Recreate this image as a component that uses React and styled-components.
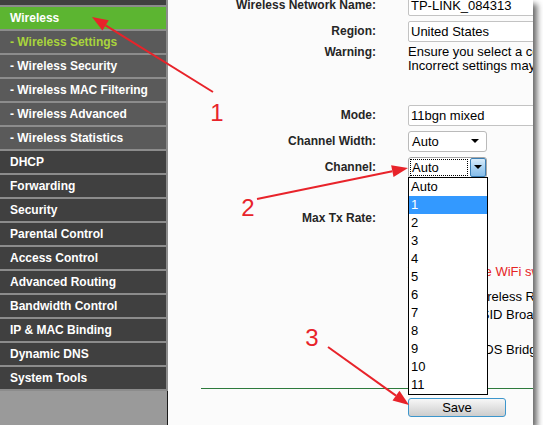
import React from 'react';
import styled, { createGlobalStyle } from 'styled-components';

const GlobalStyle = createGlobalStyle`
  *, *::before, *::after { box-sizing: border-box; }
  html, body { margin: 0; padding: 0; background: #fff; }
  body { font-family: "Liberation Sans", Arial, sans-serif; }
`;

const Frame = styled.div`
  position: relative;
  width: 533px;
  height: 425px;
  display: flex;
  overflow: hidden;
  box-shadow: 4px 4px 6px rgba(0, 0, 0, 0.6);
`;

const Sidebar = styled.nav`
  width: 168px;
  flex: none;
  display: flex;
  flex-direction: column;
  margin-top: -17px;
`;

const NavItem = styled.div`
  height: 24px;
  line-height: 22px;
  padding-left: 10px;
  font-size: 12px;
  font-weight: bold;
  white-space: nowrap;
  background: ${({ $active, $sub }) =>
    $active ? '#5cb531' : $sub ? '#5a5a5a' : '#404040'};
  color: ${({ $current }) => ($current ? '#a9d43c' : '#ffffff')};
  border-bottom: 2px solid #8c8c8c;
  border-right: 2px solid #8c8c8c;
`;

const Filler = styled.div`
  flex: 1;
  background: #9a9a9a;
  border-right: 1px solid #1a1a1a;
`;

const Content = styled.main`
  flex: 1;
  min-width: 0;
  background: #fbfbfb;
  font-size: 13px;
  color: #000;
`;

const Form = styled.div`
  display: flex;
  flex-direction: column;
  margin-top: -8px;
`;

const Row = styled.div`
  display: grid;
  grid-template-columns: 208px 1fr;
  column-gap: 32px;
  align-items: ${({ $top }) => ($top ? 'start' : 'center')};
  height: ${({ $h }) => $h || 26}px;
  margin-top: ${({ $mt }) => $mt || 0}px;
  padding-top: ${({ $top }) => ($top ? 1 : 0)}px;
`;

const Label = styled.div`
  text-align: right;
  font-weight: bold;
  font-size: 12px;
  line-height: 14px;
  color: #262626;
  white-space: nowrap;
`;

const Value = styled.div`
  position: relative;
  min-width: 0;
  white-space: nowrap;
  line-height: 14px;
  color: ${({ $red }) => ($red ? '#e52424' : '#000')};
`;

const TextBox = styled.div`
  width: 150px;
  height: 21px;
  border: 1px solid #c3c3c3;
  border-radius: 2px;
  background: #fff;
  padding-left: 2px;
  line-height: 19px;
`;

const Select = styled.div`
  position: relative;
  width: 79px;
  height: 21px;
  display: flex;
  align-items: center;
  border: 1px solid ${({ $focus }) => ($focus ? '#a5a5a5' : '#bababa')};
  border-radius: 3px;
  background: #fff;
  padding: 0 ${({ $focus }) => ($focus ? 0 : 2)}px 0 1px;
`;

const SelectText = styled.span`
  flex: 1;
  height: 17px;
  line-height: 15px;
  padding-left: 1px;
  margin-right: ${({ $focus }) => ($focus ? 2 : 0)}px;
  border: 1px dotted ${({ $focus }) => ($focus ? '#000' : 'transparent')};
`;

const Caret = styled.span`
  width: 0;
  height: 0;
  margin: 0 5px;
  border-left: 4px solid transparent;
  border-right: 4px solid transparent;
  border-top: 4px solid #000;
`;

const DropButton = styled.span`
  width: 16px;
  height: 19px;
  display: flex;
  align-items: center;
  justify-content: center;
  border: 1px solid #3b7fb5;
  border-radius: 2px;
  background: linear-gradient(#d9ecfa, #a9d2f2 50%, #86bde9);
  & ${Caret} {
    margin: 0;
  }
`;

const List = styled.ul`
  position: absolute;
  top: 100%;
  left: -1px;
  width: 80px;
  margin: 0;
  padding: 0;
  list-style: none;
  background: #fff;
  border: 1px solid #000;
  z-index: 5;
`;

const Option = styled.li`
  height: 18px;
  line-height: 18px;
  padding-left: 2px;
  background: ${({ $selected }) => ($selected ? '#3399ff' : '#fff')};
  color: ${({ $selected }) => ($selected ? '#fff' : '#000')};
`;

const Check = styled.span`
  display: inline-block;
  width: 13px;
  height: 13px;
  margin: 0 4px 0 3px;
  vertical-align: -2px;
  border: 1px solid #7a7a7a;
  background: #fff;
`;

const Divider = styled.div`
  height: 1px;
  margin: 29px 0 0 33px;
  background: #2d7a3c;
`;

const SaveRow = styled.div`
  display: flex;
  padding: 9px 0 0 240px;
`;

const SaveButton = styled.button`
  width: 98px;
  height: 19px;
  padding: 0;
  border: 1px solid #3d96cc;
  border-radius: 3px;
  background: linear-gradient(#f7f7f7, #e2e2e2 50%, #cdcdcd);
  font-family: "Liberation Sans", Arial, sans-serif;
  font-size: 13px;
  line-height: 17px;
  color: #000;
`;

const Overlay = styled.svg`
  position: absolute;
  left: 0;
  top: 0;
  width: 533px;
  height: 425px;
  pointer-events: none;
  z-index: 10;
`;

const Num = styled.text`
  font-family: "Liberation Sans", Arial, sans-serif;
  font-size: 24px;
  fill: #e8232a;
`;

const menu = [
  { label: 'Network' },
  { label: 'Wireless', active: true },
  { label: '- Wireless Settings', sub: true, current: true },
  { label: '- Wireless Security', sub: true },
  { label: '- Wireless MAC Filtering', sub: true },
  { label: '- Wireless Advanced', sub: true },
  { label: '- Wireless Statistics', sub: true },
  { label: 'DHCP' },
  { label: 'Forwarding' },
  { label: 'Security' },
  { label: 'Parental Control' },
  { label: 'Access Control' },
  { label: 'Advanced Routing' },
  { label: 'Bandwidth Control' },
  { label: 'IP & MAC Binding' },
  { label: 'Dynamic DNS' },
  { label: 'System Tools' },
];

const channels = ['Auto', '1', '2', '3', '4', '5', '6', '7', '8', '9', '10', '11'];

function Arrow({ x1, y1, x2, y2 }) {
  const dx = x2 - x1;
  const dy = y2 - y1;
  const len = Math.hypot(dx, dy);
  const ux = dx / len;
  const uy = dy / len;
  const bx = x2 - ux * 16;
  const by = y2 - uy * 16;
  const px = -uy * 6;
  const py = ux * 6;
  const pts = `${x2},${y2} ${bx + px},${by + py} ${bx - px},${by - py}`;
  return (
    <g>
      <line x1={x1} y1={y1} x2={bx} y2={by} stroke="#e8232a" strokeWidth="2" />
      <polygon points={pts} fill="#e8232a" />
    </g>
  );
}

export default function App() {
  return (
    <>
      <GlobalStyle />
      <Frame>
        <Sidebar>
          {menu.map((m) => (
            <NavItem key={m.label} $active={m.active} $sub={m.sub} $current={m.current}>
              {m.label}
            </NavItem>
          ))}
          <Filler />
        </Sidebar>

        <Content>
          <Form>
            <Row>
              <Label>Wireless Network Name:</Label>
              <Value>
                <TextBox>TP-LINK_084313</TextBox>
              </Value>
            </Row>
            <Row>
              <Label>Region:</Label>
              <Value>
                <TextBox>United States</TextBox>
              </Value>
            </Row>
            <Row $top $h={58}>
              <Label>Warning:</Label>
              <Value>
                Ensure you select a correct country to conform local law.
                <br />
                Incorrect settings may cause interference.
              </Value>
            </Row>
            <Row>
              <Label>Mode:</Label>
              <Value>
                <TextBox>11bgn mixed</TextBox>
              </Value>
            </Row>
            <Row>
              <Label>Channel Width:</Label>
              <Value>
                <Select>
                  <SelectText>Auto</SelectText>
                  <Caret />
                </Select>
              </Value>
            </Row>
            <Row>
              <Label>Channel:</Label>
              <Value>
                <Select $focus>
                  <SelectText $focus>Auto</SelectText>
                  <DropButton>
                    <Caret />
                  </DropButton>
                  <List>
                    {channels.map((c) => (
                      <Option key={c} $selected={c === '1'}>
                        {c}
                      </Option>
                    ))}
                  </List>
                </Select>
              </Value>
            </Row>
            <Row $mt={25}>
              <Label>Max Tx Rate:</Label>
              <Value />
            </Row>
            <Row $mt={32} $h={18}>
              <Label />
              <Value $red>Turn on/off the WiFi switch to enable the wireless radio.</Value>
            </Row>
            <Row $mt={7} $h={18}>
              <Label />
              <Value>
                <Check />
                Enable Wireless Router Radio
              </Value>
            </Row>
            <Row $h={18}>
              <Label />
              <Value>
                <Check />
                Enable SSID Broadcast
              </Value>
            </Row>
            <Row $mt={17} $h={18}>
              <Label />
              <Value>
                <Check />
                Enable WDS Bridging
              </Value>
            </Row>
          </Form>
          <Divider />
          <SaveRow>
            <SaveButton>Save</SaveButton>
          </SaveRow>
        </Content>

        <Overlay viewBox="0 0 533 425">
          <Arrow x1={213} y1={92} x2={92} y2={17} />
          <Arrow x1={257} y1={199} x2={408} y2={168} />
          <Arrow x1={328} y1={347} x2={409} y2={405} />
          <Num x="217" y="121" textAnchor="middle">1</Num>
          <Num x="248" y="216" textAnchor="middle">2</Num>
          <Num x="312" y="346" textAnchor="middle">3</Num>
        </Overlay>
      </Frame>
    </>
  );
}
